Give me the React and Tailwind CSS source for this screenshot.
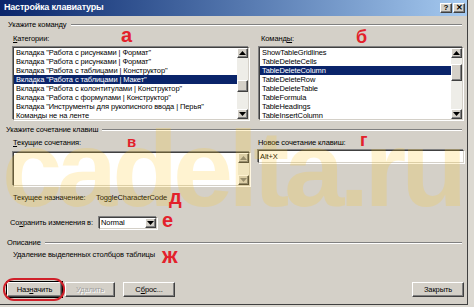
import React from "react";

const font = { fontFamily: '"Liberation Sans", Arial, sans-serif' };
const txt = "text-[7.5px] tracking-[-0.1px]";

const categories = [
  'Вкладка "Работа с рисунками | Формат"',
  'Вкладка "Работа с рисунками | Формат"',
  'Вкладка "Работа с таблицами | Конструктор"',
  'Вкладка "Работа с таблицами | Макет"',
  'Вкладка "Работа с колонтитулами | Конструктор"',
  'Вкладка "Работа с формулами | Конструктор"',
  'Вкладка "Инструменты для рукописного ввода | Перья"',
  "Команды не на ленте",
];

const commands = [
  "ShowTableGridlines",
  "TableDeleteCells",
  "TableDeleteColumn",
  "TableDeleteRow",
  "TableDeleteTable",
  "TableFormula",
  "TableHeadings",
  "TableInsertColumn",
];

const Arrow = ({ down, dim }) => (
  <svg width="7" height="4" viewBox="0 0 7 4">
    <path
      d={down ? "M0 0 L7 0 L3.5 4 Z" : "M0 4 L7 4 L3.5 0 Z"}
      fill={dim ? "#808080" : "#000"}
    />
  </svg>
);

const Btn3d = ({ className = "", children }) => (
  <div
    className={`bg-[#d4d0c8] border-t border-l border-white border-b border-r border-b-[#404040] border-r-[#404040] shadow-[inset_-1px_-1px_0_#808080] flex items-center justify-center ${className}`}
  >
    {children}
  </div>
);

const ScrollBar = ({ before, thumb, dim }) => (
  <div className="w-[11px] h-full flex flex-col bg-[#eeede8]">
    <Btn3d className="h-[10px] shrink-0">
      <Arrow dim={dim} />
    </Btn3d>
    {thumb ? (
      <>
        <div style={{ height: before }} className="shrink-0" />
        <Btn3d className="shrink-0">
          <div style={{ height: thumb - 2 }} />
        </Btn3d>
      </>
    ) : null}
    <div className="flex-1" />
    <Btn3d className="h-[10px] shrink-0">
      <Arrow down dim={dim} />
    </Btn3d>
  </div>
);

const ListBox = ({ items, selected, width, before, thumb }) => (
  <div
    className="h-[73px] bg-white border border-t-[#404040] border-l-[#404040] border-b-[#d4d0c8] border-r-[#d4d0c8] shadow-[-1px_-1px_0_#808080,1px_1px_0_#fff] flex"
    style={{ width }}
  >
    <div className="flex-1 flex flex-col overflow-hidden">
      {items.map((t, i) => (
        <div
          key={i}
          className={`h-[9px] shrink-0 leading-[9px] ${txt} px-[2px] whitespace-nowrap ${
            i === selected ? "bg-[#0a246a] text-white" : "text-black"
          }`}
        >
          {t}
        </div>
      ))}
    </div>
    <ScrollBar before={before} thumb={thumb} />
  </div>
);

const GroupHeader = ({ label, className = "" }) => (
  <div className={`flex items-center gap-[4px] pr-[5px] ${className}`}>
    <span className={`${txt} text-black whitespace-nowrap`}>{label}</span>
    <div className="flex-1 h-[2px] border-t border-[#808080] border-b border-b-white" />
  </div>
);

const Red = ({ children, className }) => (
  <span className={`absolute leading-none font-bold text-[#e3212b] ${className}`}>
    {children}
  </span>
);

export default function App() {
  return (
    <div className="w-[474px] h-[307px] bg-[#dcd9d2] overflow-hidden" style={font}>
      <div className="relative w-[468px] h-[305px] bg-[#d4d0c8] border-r border-b border-[#404040] flex flex-col">
        {/* title bar */}
        <div className="h-[16px] shrink-0 flex items-center justify-between pl-[4px] pr-[2px] bg-gradient-to-r from-[#0a246a] to-[#a6caf0]">
          <span className="text-white font-bold text-[9px] tracking-[-0.2px]">Настройка клавиатуры</span>
          <div className="flex gap-[1px]">
            <Btn3d className="w-[12px] h-[10px] text-[8px] font-bold leading-none">?</Btn3d>
            <Btn3d className="w-[12px] h-[10px] text-[8px] font-bold leading-none">✕</Btn3d>
          </div>
        </div>

        <div className="flex flex-col pl-[6px] whitespace-nowrap">
          <GroupHeader label="Укажите команду" className="h-[18px] pl-[2px]" />
          <div className={`h-[10px] flex items-center ${txt} pl-[7px]`}>
            <span className="w-[248px]">
              <u>К</u>атегории:
            </span>
            <span>
              Команд<u>ы</u>:
            </span>
          </div>
          <div className="mt-[3px] flex pl-[7px] gap-[10px]">
            <ListBox items={categories} selected={3} width={236} before={22} thumb={12} />
            <ListBox items={commands} selected={2} width={204} before={6} thumb={17} />
          </div>

          <GroupHeader label="Укажите сочетание клавиш" className="h-[16px] mt-[2px]" />
          <div className={`h-[10px] flex items-center ${txt} pl-[7px]`}>
            <span className="w-[245px]">
              <u>Т</u>екущие сочетания:
            </span>
            <span>Новое сочетание клавиш:</span>
          </div>
          <div className="h-[38px] flex items-start pl-[7px] gap-[8px]">
            <div className="mt-[4px] w-[237px] h-[34px] bg-white border border-t-[#404040] border-l-[#404040] border-b-[#d4d0c8] border-r-[#d4d0c8] shadow-[-1px_-1px_0_#808080,1px_1px_0_#fff] flex">
              <div className="flex-1" />
              <ScrollBar dim />
            </div>
            <div className={`mt-[2px] w-[206px] h-[13px] bg-white border border-t-[#404040] border-l-[#404040] border-b-[#d4d0c8] border-r-[#d4d0c8] shadow-[-1px_-1px_0_#808080,1px_1px_0_#fff] ${txt} leading-[11px] px-[1px]`}>
              Alt+X
            </div>
          </div>

          <div className={`h-[12px] mt-[6px] flex items-center ${txt} pl-[7px]`}>
            <span className="w-[83px]">Текущее назначение:</span>
            <span>ToggleCharacterCode</span>
          </div>

          <div className={`h-[14px] mt-[12px] flex items-center ${txt} pl-[4px]`}>
            <span className="w-[89px]">
              Со<u>х</u>ранить изменения в:
            </span>
            <div className="w-[58px] h-[12px] bg-white border border-t-[#404040] border-l-[#404040] border-b-[#d4d0c8] border-r-[#d4d0c8] shadow-[-1px_-1px_0_#808080,1px_1px_0_#fff] flex items-stretch">
              <span className="flex-1 leading-[10px] px-[1px]">Normal</span>
              <Btn3d className="w-[11px]">
                <Arrow down />
              </Btn3d>
            </div>
          </div>

          <GroupHeader label="Описание" className="h-[14px] mt-[6px] pl-[1px]" />
          <div className={`h-[10px] flex items-center ${txt} pl-[7px]`}>
            Удаление выделенных столбцов таблицы
          </div>

          <div className={`mt-[22px] h-[15px] flex ${txt} pl-[1px] pr-[3px]`}>
            <Btn3d className="w-[55px] h-[15px] outline outline-1 outline-black">
              Наз<u>н</u>ачить
            </Btn3d>
            <Btn3d className="w-[50px] h-[15px] ml-[3px] text-[#a0a0a0] [text-shadow:1px_1px_0_#fff]">
              Удалить
            </Btn3d>
            <Btn3d className="w-[52px] h-[15px] ml-[8px]">
              С<u>б</u>рос...
            </Btn3d>
            <div className="flex-1" />
            <Btn3d className="w-[52px] h-[15px]">Закрыть</Btn3d>
          </div>
        </div>

        {/* watermark */}
        <span className="absolute left-[2px] top-[115px] leading-none text-[108px] font-bold tracking-[-5px] text-[#ffc81e] opacity-[0.2] pointer-events-none whitespace-nowrap">
          cadelta.ru
        </span>

        {/* annotations */}
        <Red className="left-[121px] top-[25px] text-[20px]">а</Red>
        <Red className="left-[356px] top-[28px] text-[18px]">б</Red>
        <Red className="left-[127px] top-[134px] text-[15px]">в</Red>
        <Red className="left-[360px] top-[131px] text-[18px]">г</Red>
        <Red className="left-[169px] top-[187px] text-[20px]">д</Red>
        <Red className="left-[162px] top-[210px] text-[20px]">е</Red>
        <Red className="left-[162px] top-[245px] text-[22px]">ж</Red>
        <div className="absolute left-[3px] top-[278px] w-[62px] h-[23px] border-2 border-[#d0202a] rounded-[11px] pointer-events-none" />
      </div>
    </div>
  );
}
